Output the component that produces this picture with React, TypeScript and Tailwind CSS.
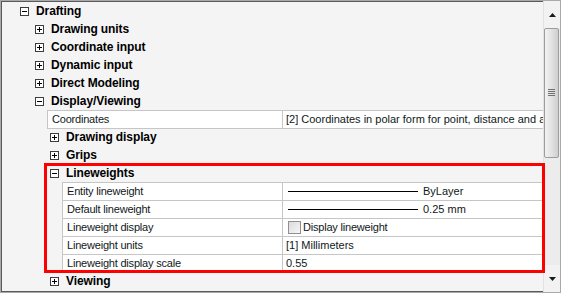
import React from "react";

type Row =
  | { kind: "node"; level: number; label: string; open: boolean }
  | { kind: "props"; level: number; items: Prop[] };

type Prop = {
  name: string;
  value: string;
  type?: "line" | "check" | "text";
};

const rows: Row[] = [
  { kind: "node", level: 0, label: "Drafting", open: true },
  { kind: "node", level: 1, label: "Drawing units", open: false },
  { kind: "node", level: 1, label: "Coordinate input", open: false },
  { kind: "node", level: 1, label: "Dynamic input", open: false },
  { kind: "node", level: 1, label: "Direct Modeling", open: false },
  { kind: "node", level: 1, label: "Display/Viewing", open: true },
  {
    kind: "props",
    level: 1,
    items: [
      {
        name: "Coordinates",
        value: "[2] Coordinates in polar form for point, distance and angle",
      },
    ],
  },
  { kind: "node", level: 2, label: "Drawing display", open: false },
  { kind: "node", level: 2, label: "Grips", open: false },
  { kind: "node", level: 2, label: "Lineweights", open: true },
  {
    kind: "props",
    level: 2,
    items: [
      { name: "Entity lineweight", value: "ByLayer", type: "line" },
      { name: "Default lineweight", value: "0.25 mm", type: "line" },
      { name: "Lineweight display", value: "Display lineweight", type: "check" },
      { name: "Lineweight units", value: "[1] Millimeters" },
      { name: "Lineweight display scale", value: "0.55" },
    ],
  },
  { kind: "node", level: 2, label: "Viewing", open: false },
];

const font = { fontFamily: '"Liberation Sans", Arial, sans-serif' };

function ToggleBox({ open }: { open: boolean }) {
  return (
    <svg width="9" height="9" viewBox="0 0 9 9" className="shrink-0">
      <rect x="0.5" y="0.5" width="8" height="8" fill="#ffffff" stroke="#3c3c3c" />
      <line x1="2" y1="4.5" x2="7" y2="4.5" stroke="#000" />
      {!open && <line x1="4.5" y1="2" x2="4.5" y2="7" stroke="#000" />}
    </svg>
  );
}

function TreeNode({ level, label, open }: { level: number; label: string; open: boolean }) {
  const pad = ["pl-[18px]", "pl-[33px]", "pl-[48px]"][level];
  return (
    <div className={`h-[18px] flex items-center ${pad}`}>
      <ToggleBox open={open} />
      <span className="ml-[7px] text-[12px] font-bold tracking-[-0.1px] leading-[18px] text-black whitespace-nowrap">
        {label}
      </span>
    </div>
  );
}

function PropValue({ item }: { item: Prop }) {
  if (item.type === "line") {
    return (
      <div className="flex items-center h-full">
        <div className="ml-[5px] w-[130px] h-px bg-black" />
        <span className="ml-[5px]">{item.value}</span>
      </div>
    );
  }
  if (item.type === "check") {
    return (
      <div className="flex items-center h-full">
        <div className="ml-[5px] w-[13px] h-[13px] border border-[#8f8f8f] bg-gradient-to-br from-[#dcdcdc] to-[#f6f6f6]" />
        <span className="ml-[2px] tracking-[-0.2px]">{item.value}</span>
      </div>
    );
  }
  return <div className="pl-[3px] leading-[17px]">{item.value}</div>;
}

function PropGroup({ level, items }: { level: number; items: Prop[] }) {
  const ml = level === 1 ? "ml-[45px]" : "ml-[60px]";
  const nameW = level === 1 ? "w-[235px]" : "w-[220px]";
  return (
    <div className={`${ml} border-b border-[#c6c6c6] -mb-px`}>
      {items.map((item) => (
        <div
          key={item.name}
          className="h-[18px] flex border-t border-[#c6c6c6] bg-white text-[11px] text-[#101820] whitespace-nowrap"
        >
          <div className={`${nameW} shrink-0 border-l border-[#c6c6c6] pl-[4px] leading-[17px] tracking-[-0.2px]`}>
            {item.name}
          </div>
          <div className="flex-1 border-l border-[#c6c6c6] overflow-hidden">
            <PropValue item={item} />
          </div>
        </div>
      ))}
    </div>
  );
}

function Arrow({ up }: { up: boolean }) {
  return (
    <svg width="7" height="4" viewBox="0 0 7 4">
      {up ? (
        <polygon points="0,4 7,4 3.5,0" fill="#1a1a1a" />
      ) : (
        <polygon points="0,0 7,0 3.5,4" fill="#1a1a1a" />
      )}
    </svg>
  );
}

function ScrollBar() {
  return (
    <div className="w-[17px] shrink-0 flex flex-col bg-[#ececec] border-l border-[#e2e2e2]">
      <div className="h-[27px] flex items-center justify-center pt-[1px] bg-[#f2f2f2]">
        <Arrow up />
      </div>
      <div className="h-[130px] mr-[1px] rounded-[2px] border border-[#9c9c9c] bg-gradient-to-r from-[#f2f2f2] via-[#e2e2e2] to-[#cfcfcf] flex flex-col items-center justify-center">
        <div className="flex flex-col gap-[1px] mt-[-2px]">
          <div className="w-[7px] h-px bg-[#707070]" />
          <div className="w-[7px] h-px bg-[#707070]" />
          <div className="w-[7px] h-px bg-[#707070]" />
          <div className="w-[7px] h-px bg-[#707070]" />
        </div>
      </div>
      <div className="flex-1" />
      <div className="h-[27px] flex items-center justify-center bg-[#f2f2f2]">
        <Arrow up={false} />
      </div>
    </div>
  );
}

export default function App() {
  return (
    <div
      className="relative w-[561px] h-[293px] bg-white border border-[#a9a9a9] flex overflow-hidden"
      style={font}
    >
      {/* tree panel */}
      <div className="flex-1 bg-[#f4f4f4] border-l border-t border-b border-[#5a5a5a] overflow-hidden">
        {rows.map((r, i) =>
          r.kind === "node" ? (
            <TreeNode key={i} level={r.level} label={r.label} open={r.open} />
          ) : (
            <PropGroup key={i} level={r.level} items={r.items} />
          )
        )}
      </div>

      <ScrollBar />

      {/* highlight */}
      <div className="absolute left-[43px] top-[162px] w-[501px] h-[110px] border-[3px] border-[#ff0000] pointer-events-none" />
    </div>
  );
}
